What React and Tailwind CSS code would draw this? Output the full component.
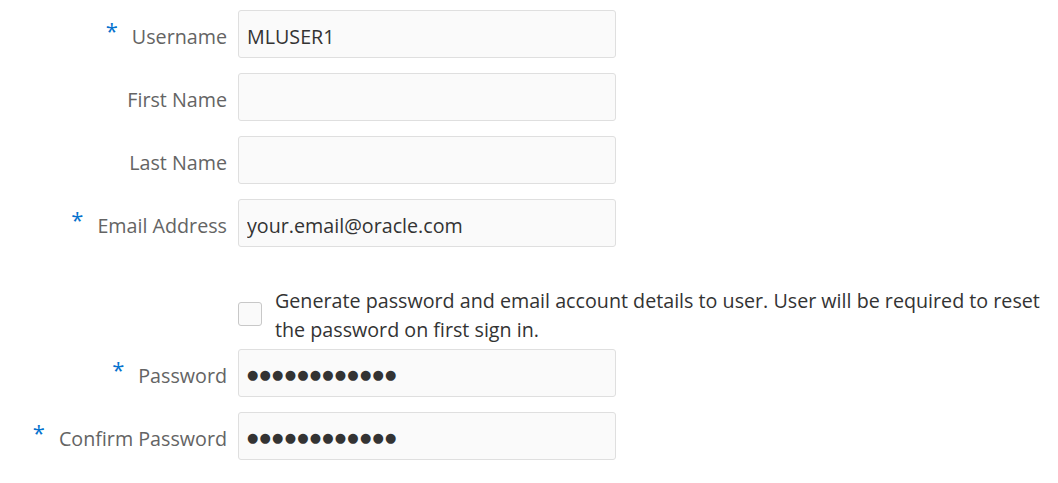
import { useState } from 'react'

function Field({ label, required, value, secret }) {
  return (
    <div className="flex items-center h-[48px] mb-[15px]">
      <div className="w-[227px] flex justify-end items-center pt-[6px]">
        {required && <span className="text-[#0572ce] text-[22px] leading-none mr-[14px] -mt-[14px]">*</span>}
        <label className="text-[#646464]">{label}</label>
      </div>
      <input
        type="text"
        readOnly={secret}
        defaultValue={value}
        className={
          secret
            ? 'ml-[11px] w-[378px] h-[48px] pl-[8px] pt-[3px] bg-[#fafafa] border border-[#dfdfdf] rounded-[3px] text-[#333] text-[13px] tracking-[1.2px] outline-none'
            : 'ml-[11px] w-[378px] h-[48px] pl-[8px] pt-[5px] bg-[#fafafa] border border-[#dfdfdf] rounded-[3px] text-[#333] outline-none'
        }
        style={secret ? { fontFamily: '"DejaVu Sans", sans-serif' } : undefined}
      />
    </div>
  )
}

export default function App() {
  const [checked, setChecked] = useState(false)
  const dots = '●●●●●●●●●●●●'
  return (
    <div className="bg-white w-[1058px] h-[483px] pt-[10px] text-[19.7px]" style={{ fontFamily: '"Open Sans", "Noto Sans", sans-serif' }}>
      <Field label="Username" required value="MLUSER1" />
      <Field label="First Name" />
      <Field label="Last Name" />
      <Field label="Email Address" required value="your.email@oracle.com" />
      <div className="flex items-start ml-[238px] mt-[39px] mb-[5px]">
        <input
          type="checkbox"
          checked={checked}
          onChange={() => setChecked(!checked)}
          className="appearance-none w-[24px] h-[24px] mt-[16px] shrink-0 bg-[#fafafa] border border-[#c8c8c8] rounded-[3px]"
        />
        <p className="ml-[13px] text-[#333] leading-[29px]">
          Generate password and email account details to user. User will be required to reset<br />
          the password on first sign in.
        </p>
      </div>
      <Field label="Password" required value={dots} secret />
      <Field label="Confirm Password" required value={dots} secret />
    </div>
  )
}
